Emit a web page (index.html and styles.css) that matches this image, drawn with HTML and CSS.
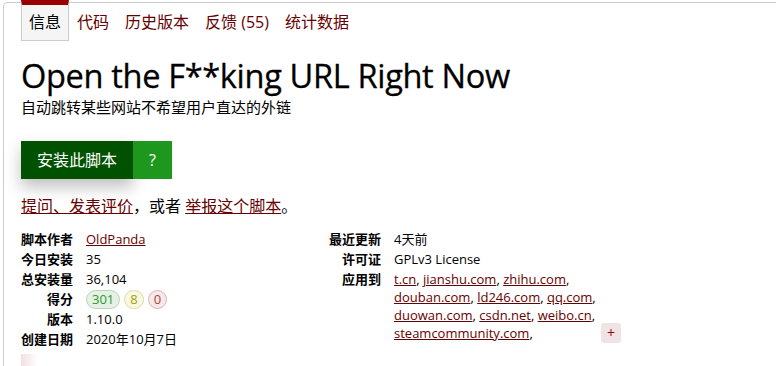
FILE: index.html
```html
<!DOCTYPE html>
<html lang="zh-CN">

<head>
    <meta charset="utf-8">
    <title>Open the F**king URL Right Now</title>
    <meta name="viewport" content="width=device-width, initial-scale=1">
    <link rel="stylesheet" href="styles.css">
</head>

<body>
    <div class="script-page">
        <ul class="tabs">
            <li class="tab current">信息</li>
            <li class="tab"><a href="#">代码</a></li>
            <li class="tab"><a href="#">历史版本</a></li>
            <li class="tab"><a href="#">反馈 (55)</a></li>
            <li class="tab"><a href="#">统计数据</a></li>
        </ul>

        <header class="script-head">
            <h2>Open the F**king URL Right Now</h2>
            <p class="desc">自动跳转某些网站不希望用户直达的外链</p>
        </header>

        <div class="install-area">
            <a class="install-link" href="#">安装此脚本</a><a class="install-help" href="#">?</a>
        </div>

        <p class="feedback"><a href="#">提问、发表评价</a>，或者 <a href="#">举报这个脚本</a>。</p>

        <div class="meta">
            <dl class="meta-col">
                <dt>脚本作者</dt>
                <dd><a href="#">OldPanda</a></dd>
                <dt>今日安装</dt>
                <dd>35</dd>
                <dt>总安装量</dt>
                <dd>36,104</dd>
                <dt>得分</dt>
                <dd class="ratings">
                    <span class="pill good">301</span>
                    <span class="pill ok">8</span>
                    <span class="pill bad">0</span>
                </dd>
                <dt>版本</dt>
                <dd>1.10.0</dd>
                <dt>创建日期</dt>
                <dd>2020年10月7日</dd>
            </dl>
            <dl class="meta-col">
                <dt>最近更新</dt>
                <dd>4天前</dd>
                <dt>许可证</dt>
                <dd>GPLv3 License</dd>
                <dt>应用到</dt>
                <dd class="applies">
                    <span class="sites"><a href="#">t.cn</a>, <a href="#">jianshu.com</a>, <a href="#">zhihu.com</a>,
                        <a href="#">douban.com</a>, <a href="#">ld246.com</a>, <a href="#">qq.com</a>,
                        <a href="#">duowan.com</a>, <a href="#">csdn.net</a>, <a href="#">weibo.cn</a>,
                        <a href="#">steamcommunity.com</a>,</span>
                    <span class="more">+</span>
                </dd>
            </dl>
        </div>

        <div class="additional">
            <span class="shot"></span>
            <span class="more-text">自动跳转到目标网址，不再显示中间的外链提示页面，让你直接访问想去的网站。</span>
        </div>
    </div>
</body>

</html>
```

FILE: styles.css
```css
* {
    margin: 0;
    padding: 0;
    list-style: none;
    box-sizing: border-box;
}

html,
body {
    background: #fff;
    color: #000;
    font-family: "Open Sans", "Noto Sans CJK SC", sans-serif;
    overflow: hidden;
}

a {
    color: #670000;
}

.script-page {
    margin: 2px 0 0 3px;
    padding: 0 0 0 17px;
    border-top: 1px solid #ccc;
    border-left: 1px solid #ccc;
    border-top-left-radius: 5px;
    height: 400px;
}

/* tabs */
.tabs {
    display: flex;
    margin-top: -3px;
    height: 41px;
}

.tab {
    padding: 0 8px;
    font-size: 16px;
    line-height: 40px;
    padding-top: 2px;
}

.tab a {
    text-decoration: none;
}

.tab.current {
    background: #f5f5f5;
    border: 1px solid #ccc;
    border-top: 5px solid #990000;
    line-height: 34px;
    padding: 0 7px;
    height: 41px;
}

/* header */
.script-head h2 {
    font-size: 32.6px;
    font-weight: 400;
    line-height: 44px;
    margin-top: 13px;
    letter-spacing: -0.35px;
    -webkit-text-stroke: 0.3px #000;
}

.desc {
    font-size: 15px;
    line-height: 20px;
    margin-top: -1px;
}

/* install */
.install-area {
    display: flex;
    margin-top: 24px;
}

.install-link,
.install-help {
    color: #fff;
    text-decoration: none;
    font-size: 16px;
    height: 38px;
    line-height: 38px;
}

.install-link {
    background: #005200;
    padding: 0 16px;
    box-shadow: 0 8px 16px rgba(0, 0, 0, 0.25);
}

.install-help {
    background: #1e971e;
    padding: 0 16px;
}

.feedback {
    font-size: 16px;
    line-height: 24px;
    margin-top: 15px;
}

/* meta */
.meta {
    display: flex;
    margin-top: 11px;
    font-size: 13px;
}

.meta-col {
    display: grid;
    grid-template-columns: 52px auto;
    column-gap: 13px;
    row-gap: 0;
    line-height: 20px;
    align-content: start;
}

.meta-col:first-child {
    width: 308px;
}

.meta-col dt {
    font-weight: 700;
    text-align: right;
}

.ratings {
    display: flex;
    gap: 4px;
    align-items: center;
}

.pill {
    display: inline-block;
    height: 19px;
    line-height: 17px;
    padding: 0 5px;
    border-radius: 10px;
    border: 1px solid;
    font-size: 13px;
}

.pill.good {
    background: #e4f1e4;
    border-color: #b3d9b3;
    color: #2e9a2e;
}

.pill.ok {
    background: #f8f8e0;
    border-color: #dcdca0;
    color: #a0a018;
}

.pill.bad {
    background: #f8e8e8;
    border-color: #dfb3b3;
    color: #a04848;
}

.applies {
    display: flex;
    align-items: flex-end;
}

.sites {
    width: 217px;
    line-height: 18px;
    padding-top: 1px;
}

.more {
    display: inline-block;
    width: 20px;
    height: 20px;
    line-height: 20px;
    text-align: center;
    border-radius: 3px;
    background: #f0e3e5;
    color: #900;
    font-size: 14px;
    margin: 0 0 -1px -10px;
}

/* additional info */
.additional {
    display: flex;
    gap: 6px;
    margin-top: 5px;
    font-size: 14px;
    line-height: 20px;
}

.shot {
    width: 17px;
    height: 20px;
    background: linear-gradient(to right, #f3dfe2, #fff);
}

.more-text {
    padding-top: 9px;
}
```
